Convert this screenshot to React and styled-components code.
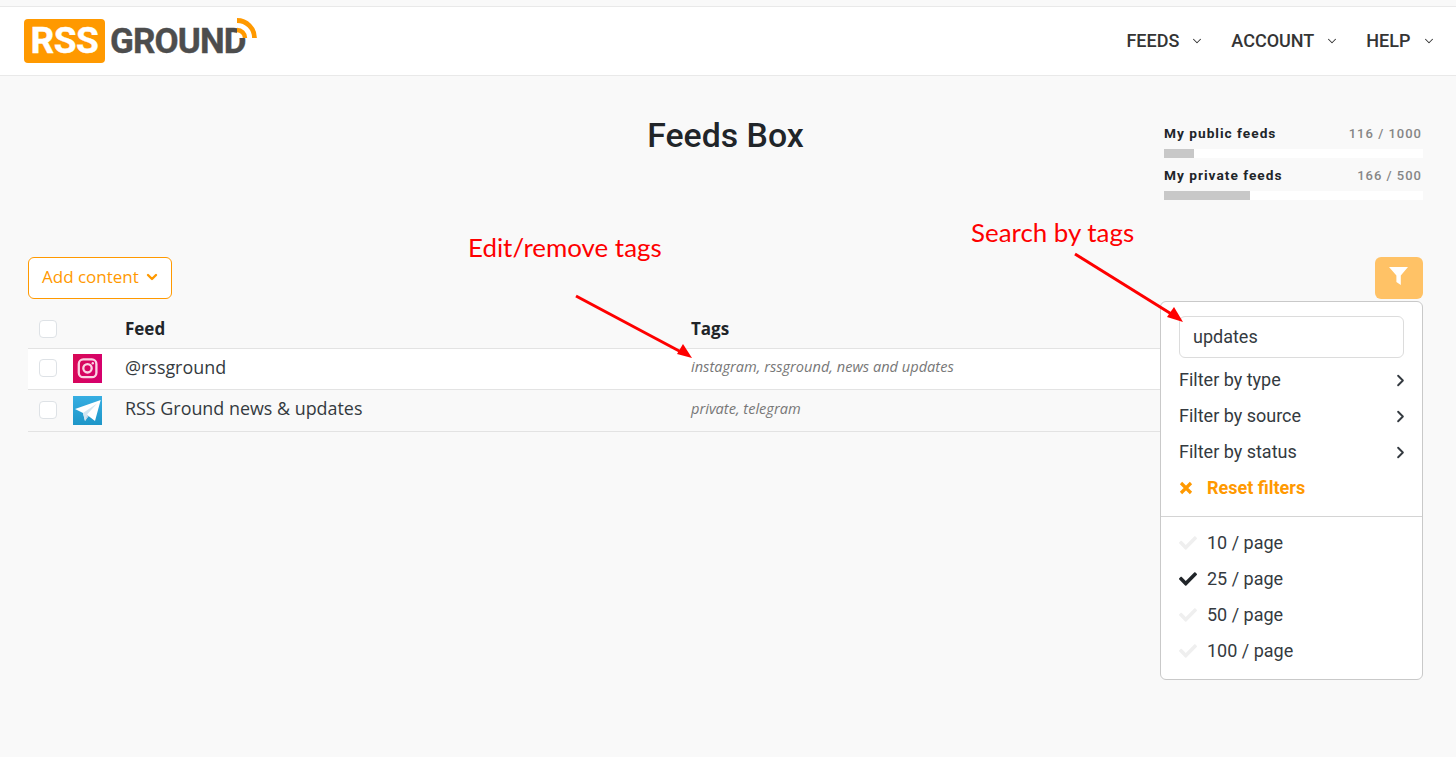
import React from "react";
import styled, { createGlobalStyle } from "styled-components";
import { FaCheck } from "react-icons/fa";
import { ChevronRight, ChevronDown } from "lucide-react";

const Global = createGlobalStyle`
  html, body { margin: 0; padding: 0; background: #f9f9f9; }
  body { font-family: "Open Sans", sans-serif; color: #212529; }
  * { box-sizing: border-box; }
`;

const Page = styled.div`
  position: relative;
  width: 1456px;
  height: 757px;
  overflow: hidden;
  padding-top: 6px;
`;
const Nav = styled.header`
  height: 70px;
  background: #fff;
  border-top: 1px solid #e9e9e9;
  border-bottom: 1px solid #e9e9e9;
  display: flex;
  align-items: flex-start;
  justify-content: space-between;
  padding: 11px 20.5px 0 24px;
`;
const Logo = styled.div`
  display: flex;
  align-items: flex-start;
  position: relative;
  width: 235px;
`;
const LogoBox = styled.div`
  width: 81px;
  height: 44px;
  margin-top: 1px;
  background: #ff9900;
  border-radius: 4px;
  color: #fff;
  font: 700 37px/44px Roboto, sans-serif;
  letter-spacing: -0.5px;
  text-align: center;
  -webkit-text-stroke: 0.4px #fff;
`;
const LogoWord = styled.div`
  margin-left: 5px;
  margin-top: 2px;
  color: #4d4d4d;
  font: 700 35px/44px Roboto, sans-serif;
  letter-spacing: -0.9px;
  -webkit-text-stroke: 0.4px #4d4d4d;
`;
const LogoWaves = styled.svg`
  position: absolute;
  left: 208px;
  top: 0;
`;
const Menu = styled.nav`
  display: flex;
  gap: 27px;
  margin-top: 11px;
`;
const MenuItem = styled.div`
  display: flex;
  align-items: center;
  gap: 11px;
  font: 500 18px/24px Roboto, sans-serif;
  color: #343434;
`;
const Content = styled.main`
  padding: 0 33px 0 28px;
`;
const Head = styled.div`
  display: grid;
  grid-template-columns: 259px 1fr 259px;
  height: 181px;
`;
const Title = styled.h1`
  grid-column: 2;
  margin: 40px 0 0;
  text-align: center;
  font: 500 33.8px/40px Roboto, sans-serif;
  color: #212529;
`;
const Stats = styled.div`
  grid-column: 3;
  padding-top: 48px;
  display: flex;
  flex-direction: column;
  gap: 8px;
`;
const Stat = styled.div`
  display: flex;
  flex-direction: column;
  gap: 6px;
`;
const StatRow = styled.div`
  display: flex;
  justify-content: space-between;
  padding-right: 1px;
  font: 13.7px/19px Roboto, sans-serif;
  letter-spacing: 1px;
`;
const StatLabel = styled.span`
  font-weight: 700;
  color: #212529;
`;
const StatValue = styled.span`
  font-weight: 500;
  font-size: 13px;
  color: #868686;
`;
const Track = styled.div`
  height: 9px;
  background: #fff;
`;
const Fill = styled.div`
  height: 100%;
  background: #c8c8c8;
`;
const Toolbar = styled.div`
  display: flex;
  justify-content: space-between;
  height: 42px;
`;
const AddButton = styled.button`
  width: 144px;
  height: 42px;
  display: flex;
  align-items: center;
  gap: 5px;
  padding: 0 0 4px 13px;
  background: #fff;
  border: 1px solid #ff9900;
  border-radius: 6px;
  color: #ff9900;
  font: 400 17px "Open Sans", sans-serif;
  svg { margin-top: 2px; }
`;
const FilterButton = styled.button`
  width: 48px;
  height: 42px;
  display: flex;
  align-items: center;
  justify-content: center;
  background: #ffc266;
  border: 0;
  border-radius: 6px;
  color: #fff;
  padding: 0 2px 5px 0;
`;
const Table = styled.div`
  margin-top: 10px;
`;
const Row = styled.div`
  display: grid;
  grid-template-columns: 45px 52px 566px 1fr;
  align-items: center;
  height: ${p => p.$h}px;
  background: ${p => (p.$active ? "#fff" : "transparent")};
  border-bottom: 1px solid #e3e3e3;
`;
const Check = styled.span`
  display: block;
  width: 18px;
  height: 18px;
  margin: 0 0 ${p => (p.$lift ? 2 : 0)}px 11px;
  background: #fff;
  border: 1px solid #dee2e6;
  border-radius: 4px;
`;
const HeadCell = styled.div`
  font: 700 17px/24px "Open Sans", sans-serif;
  color: #212529;
`;
const FeedName = styled.div`
  margin-bottom: 5px;
  font: 400 17.9px/24px "Open Sans", sans-serif;
  color: #343a40;
`;
const Tags = styled.div`
  margin-bottom: 6px;
  font: italic 400 14.6px/20px "Open Sans", sans-serif;
  color: #777;
`;
const IconWrap = styled.svg`
  display: block;
  margin-bottom: ${p => (p.$lift ? 2 : 0)}px;
`;
const Panel = styled.div`
  position: absolute;
  left: 1160px;
  top: 301px;
  width: 263px;
  height: 379px;
  background: #fff;
  border: 1px solid #c9c9c9;
  border-radius: 6px;
`;
const PanelTop = styled.div`
  padding: 14px 16px 0 18px;
  height: 215px;
  border-bottom: 1px solid #d4d4d4;
`;
const SearchInput = styled.div`
  height: 42px;
  width: 225px;
  border: 1px solid #dcdcdc;
  border-radius: 6px;
  padding: 0 13px;
  font: 400 18px/40px Roboto, sans-serif;
  color: #343a40;
`;
const FilterRow = styled.div`
  height: 36px;
  display: flex;
  align-items: center;
  justify-content: space-between;
  font: 400 18px/36px Roboto, sans-serif;
  color: #343a40;
  &:nth-child(2) { margin-top: 4px; }
  svg { margin-right: -3.5px; }
`;
const ResetRow = styled.div`
  height: 36px;
  display: flex;
  align-items: center;
  gap: 14px;
  font: 700 18px/36px Roboto, sans-serif;
  color: #ff9900;
`;
const PageList = styled.div`
  padding: 8px 0 0 18px;
`;
const PageRow = styled.div`
  height: 36px;
  display: flex;
  align-items: center;
  gap: 10px;
  font: 400 18px/36px Roboto, sans-serif;
  color: #343a40;
`;
const Mark = styled.span`
  display: flex;
  color: ${p => (p.$on ? "#212529" : "#efefef")};
`;
const Note = styled.div`
  position: absolute;
  left: ${p => p.$x}px;
  top: ${p => p.$y}px;
  font: 400 25.9px/32px Lato, sans-serif;
  color: #fe0000;
  white-space: nowrap;
`;
const Arrows = styled.svg`
  position: absolute;
  left: 0;
  top: 0;
  pointer-events: none;
`;

const Insta = () => (
  <IconWrap $lift width="29" height="29" viewBox="0 0 29 29">
    <defs>
      <linearGradient id="ig" x1="0" y1="0" x2="1" y2="0.3">
        <stop offset="0" stopColor="#d80a55" />
        <stop offset="1" stopColor="#d6006c" />
      </linearGradient>
    </defs>
    <rect width="29" height="29" fill="url(#ig)" />
    <rect x="5.8" y="5.4" width="17.6" height="17.8" rx="4.5" fill="none" stroke="#fbd3e3" strokeWidth="2.3" />
    <circle cx="14.5" cy="14.3" r="4.2" fill="none" stroke="#fbd3e3" strokeWidth="2.3" />
    <circle cx="19.8" cy="9.2" r="1.2" fill="#fbd3e3" />
  </IconWrap>
);
const Telegram = () => (
  <IconWrap width="29" height="29" viewBox="0 0 29 29">
    <defs>
      <linearGradient id="tg" x1="0" y1="0" x2="0" y2="1">
        <stop offset="0" stopColor="#37aee2" />
        <stop offset="1" stopColor="#1e96c8" />
      </linearGradient>
    </defs>
    <rect width="29" height="29" fill="url(#tg)" />
    <path d="M2 13 27.7 4 22 25 15.5 20 12 25 10 17Z" fill="#fff" />
    <path d="M10 17 24 7.5 14 18.5 12 25Z" fill="#d2e5f1" />
    <path d="M14 18.5 15.5 20 12 25Z" fill="#b5cfe4" />
  </IconWrap>
);
const Funnel = () => (
  <svg width="19" height="18" viewBox="0 0 19 18">
    <path d="M0 0H19L11.8 8.6V18L7.4 15V8.6Z" fill="#fff" />
  </svg>
);
const Cross = () => (
  <svg width="14" height="14" viewBox="0 0 14 14">
    <path d="M2 2 12 12M12 2 2 12" fill="none" stroke="#ff9900" strokeWidth="3.2" />
  </svg>
);

const pages = [["10 / page", false], ["25 / page", true], ["50 / page", false], ["100 / page", false]];

export default function App() {
  return (
    <Page>
      <Global />
      <Nav>
        <Logo>
          <LogoBox>RSS</LogoBox>
          <LogoWord>GROUND</LogoWord>
          <LogoWaves width="28" height="32" viewBox="0 0 28 32">
            <path d="M5 20V6A14 14 0 0 1 19 20Z" fill="#fff" />
            <path d="M5 2.5A17.5 17.5 0 0 1 22.5 20" fill="none" stroke="#ff9900" strokeWidth="4.8" />
            <path d="M5 12A8 8 0 0 1 13 20" fill="none" stroke="#ff9900" strokeWidth="4.4" />
          </LogoWaves>
        </Logo>
        <Menu>
          <MenuItem>FEEDS <ChevronDown size={14} strokeWidth={1.8} /></MenuItem>
          <MenuItem>ACCOUNT <ChevronDown size={14} strokeWidth={1.8} /></MenuItem>
          <MenuItem>HELP <ChevronDown size={14} strokeWidth={1.8} /></MenuItem>
        </Menu>
      </Nav>
      <Content>
        <Head>
          <Title>Feeds Box</Title>
          <Stats>
            <Stat>
              <StatRow><StatLabel>My public feeds</StatLabel><StatValue>116 / 1000</StatValue></StatRow>
              <Track><Fill style={{ width: "11.6%" }} /></Track>
            </Stat>
            <Stat>
              <StatRow><StatLabel>My private feeds</StatLabel><StatValue>166 / 500</StatValue></StatRow>
              <Track><Fill style={{ width: "33.2%" }} /></Track>
            </Stat>
          </Stats>
        </Head>
        <Toolbar>
          <AddButton>Add content <ChevronDown size={16} strokeWidth={3.6} /></AddButton>
          <FilterButton><Funnel /></FilterButton>
        </Toolbar>
        <Table>
          <Row $h={40}>
            <Check />
            <span />
            <HeadCell>Feed</HeadCell>
            <HeadCell>Tags</HeadCell>
          </Row>
          <Row $h={41} $active>
            <Check $lift />
            <Insta />
            <FeedName>@rssground</FeedName>
            <Tags>instagram, rssground, news and updates</Tags>
          </Row>
          <Row $h={42}>
            <Check $lift />
            <Telegram />
            <FeedName>RSS Ground news &amp; updates</FeedName>
            <Tags>private, telegram</Tags>
          </Row>
        </Table>
      </Content>
      <Panel>
        <PanelTop>
          <SearchInput>updates</SearchInput>
          <FilterRow>Filter by type <ChevronRight size={19} strokeWidth={2.4} /></FilterRow>
          <FilterRow>Filter by source <ChevronRight size={19} strokeWidth={2.4} /></FilterRow>
          <FilterRow>Filter by status <ChevronRight size={19} strokeWidth={2.4} /></FilterRow>
          <ResetRow><Cross /> Reset filters</ResetRow>
        </PanelTop>
        <PageList>
          {pages.map(([label, on]) => (
            <PageRow key={label}>
              <Mark $on={on}><FaCheck size={18} /></Mark>
              {label}
            </PageRow>
          ))}
        </PageList>
      </Panel>
      <Note $x={468} $y={231}>Edit/remove tags</Note>
      <Note $x={971} $y={216}>Search by tags</Note>
      <Arrows width="1456" height="757" viewBox="0 0 1456 757">
        <line x1="576" y1="296" x2="682" y2="352.5" stroke="#fe0000" strokeWidth="3" />
        <polygon points="692,358 677,354 683,344" fill="#fe0000" />
        <line x1="1075" y1="254" x2="1173" y2="315" stroke="#fe0000" strokeWidth="3" />
        <polygon points="1183,322 1167,317 1174,307" fill="#fe0000" />
      </Arrows>
    </Page>
  );
}
